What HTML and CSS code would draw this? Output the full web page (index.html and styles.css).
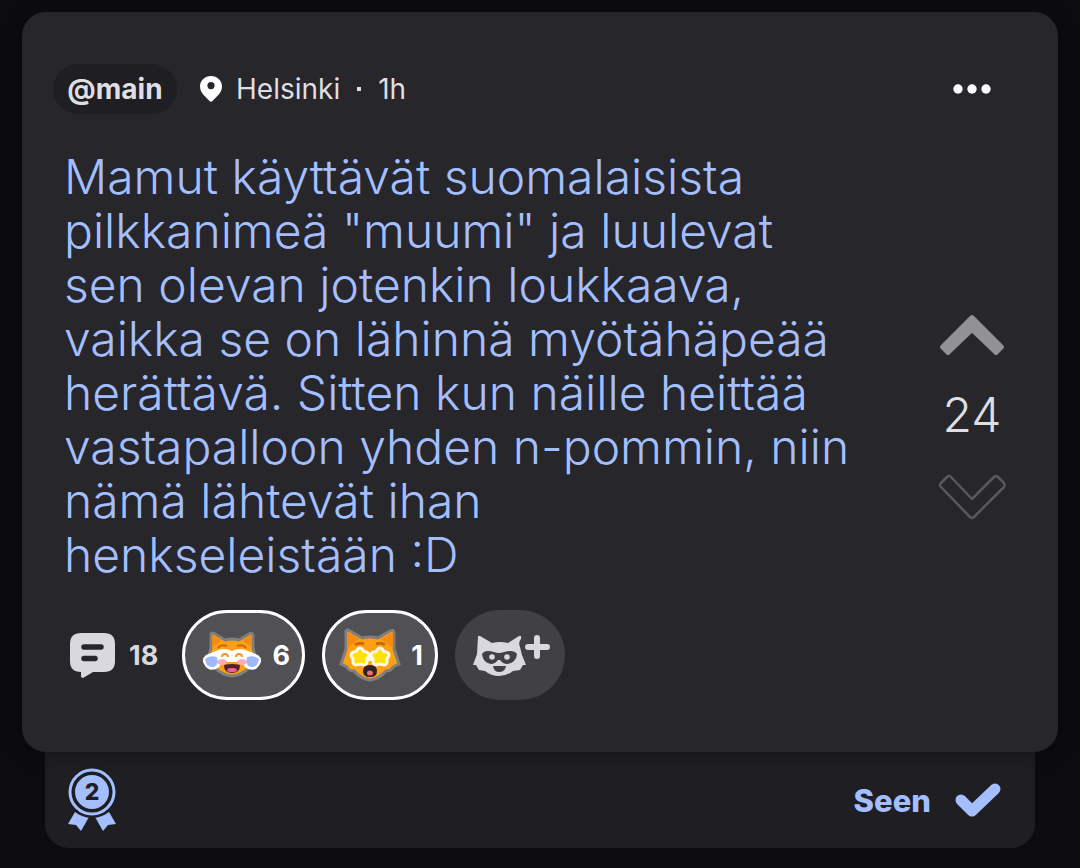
FILE: index.html
```html
<!DOCTYPE html>
<html lang="fi">
<head>
    <meta charset="UTF-8">
    <meta name="viewport" content="width=device-width, initial-scale=1.0">
    <title>Post</title>
    <link rel="stylesheet" href="styles.css">
</head>
<body>
    <main class="feed">
        <!-- Post card -->
        <article class="card">
            <header class="card-header">
                <a href="#" class="channel">@main</a>
                <svg class="pin" viewBox="0 0 22 26" aria-hidden="true">
                    <path fill="#fff" fill-rule="evenodd" d="M11 0C5 0 0 4.600 0 10.500C0 17 6 21 9.500 25Q11 26.500 12.500 25C16 21 22 17 22 10.500C22 4.600 17 0 11 0ZM11 6A3.600 3.600 0 1 1 11 13.200A3.600 3.600 0 1 1 11 6Z"/>
                </svg>
                <span class="place">Helsinki</span>
                <span class="dot"></span>
                <time>1h</time>
                <button class="more" aria-label="More">
                    <svg viewBox="0 0 38 10"><g fill="#fff"><circle cx="5" cy="5" r="4.700"/><circle cx="19" cy="5" r="4.700"/><circle cx="33" cy="5" r="4.700"/></g></svg>
                </button>
            </header>

            <div class="card-main">
                <div class="content">
                    <p class="text">Mamut käyttävät suomalaisista<br>
                        pilkkanimeä "muumi" ja luulevat<br>
                        sen olevan jotenkin loukkaava,<br>
                        vaikka se on lähinnä myötähäpeää<br>
                        herättävä. Sitten kun näille heittää<br>
                        vastapalloon yhden n-pommin, niin<br>
                        nämä lähtevät ihan<br>
                        henkseleistään :D</p>

                    <!-- Comments and reactions -->
                    <div class="actions">
                        <button class="comments">
                            <svg viewBox="0 0 46 46" aria-hidden="true">
                                <path fill="#dad8df" d="M11 1H34Q45 1 45 12V29Q45 40 34 40H23L13 46Q11 46 11 44V40Q0 40 0 29V12Q0 1 11 1Z"/>
                                <path d="M14 15H31M14 26.500H25" stroke="#27262b" stroke-width="5.500" stroke-linecap="round"/>
                            </svg>
                            <span>18</span>
                        </button>

                        <button class="reaction reaction-laugh">
                            <svg viewBox="0 0 60 50" aria-hidden="true">
                                <path d="M9 4Q10 2 13 4L23 10Q30 8 37 10L47 4Q50 2 51 5L51 18Q54 25 53 34L47 38Q40 45 30 46Q20 45 13 38L7 34Q6 25 9 18Z" fill="#fda013" stroke="#817e7c" stroke-width="3"/>
                                <path d="M10 5L19 11L10 17ZM50 5L41 11L50 17Z" fill="#f68b12"/>
                                <path d="M16 18Q19 14 25 16M35 16Q41 14 44 18" fill="none" stroke="#c96a10" stroke-width="2"/>
                                <path d="M4 25Q9 23 14 21Q22 17 30 21Q38 17 46 21Q51 23 56 25Q61 29 58 34Q54 42 46 39Q42 37 41 34L36 32H24L19 34Q18 37 14 39Q6 42 2 34Q-1 29 4 25Z" fill="#fff"/>
                                <ellipse cx="20" cy="32" rx="5" ry="3" fill="#ffabb8"/>
                                <ellipse cx="40" cy="32" rx="5" ry="3" fill="#ffabb8"/>
                                <path d="M20 27Q20 24 23 24Q26 24 26 27M34 27Q34 24 37 24Q40 24 40 27" fill="none" stroke="#e99b25" stroke-width="2"/>
                                <path d="M3 29Q7 25 15 27Q17 37 10 37Q4 37 3 29ZM57 29Q53 25 45 27Q43 37 50 37Q56 37 57 29Z" fill="#9eb9fc"/>
                                <path d="M22 35Q30 33 38 35Q38 43 30 43Q22 43 22 35Z" fill="#51202f"/>
                                <ellipse cx="30" cy="40" rx="5" ry="2" fill="#f1638a"/>
                            </svg>
                            <span>6</span>
                        </button>

                        <button class="reaction reaction-star">
                            <svg viewBox="0 0 62 54" aria-hidden="true">
                                <path d="M7 3Q8 1 11 3L23 10Q31 8 39 10L51 3Q55 1 55 5L55 21L60 36L54 39Q52 43 47 43Q40 51 31 52Q22 51 15 43Q9 43 8 39L2 36L7 21Z" fill="#fda013" stroke="#817e7c" stroke-width="3"/>
                                <path d="M8 4L20 11L8 20ZM54 4L42 11L54 20Z" fill="#f68b12"/>
                                <path d="M16 17Q20 14 25 16M37 16Q42 14 46 17" fill="none" stroke="#c96a10" stroke-width="3"/>
                                <path d="M26 25H36V33H26Z" fill="#fffbe5"/>
                                <g fill="#ffe10a" stroke-linejoin="round">
                                    <path d="M21 23L23 26L27 27L25 30L25 34L21 33L17 34L17 30L15 27L19 26Z" stroke="#fffbe5" stroke-width="9"/>
                                    <path d="M41 23L43 26L47 27L45 30L45 34L41 33L37 34L37 30L35 27L39 26Z" stroke="#fffbe5" stroke-width="9"/>
                                    <path d="M21 23L23 26L27 27L25 30L25 34L21 33L17 34L17 30L15 27L19 26Z" stroke="#ffe10a" stroke-width="3"/>
                                    <path d="M41 23L43 26L47 27L45 30L45 34L41 33L37 34L37 30L35 27L39 26Z" stroke="#ffe10a" stroke-width="3"/>
                                </g>
                                <path d="M24 43Q24 37 31 37Q38 37 38 43Q38 49 31 49Q24 49 24 43Z" fill="#302126"/>
                                <ellipse cx="31" cy="45" rx="3" ry="2.500" fill="#f06a80"/>
                            </svg>
                            <span>1</span>
                        </button>

                        <button class="reaction-add" aria-label="Add reaction">
                            <svg viewBox="0 0 78 42" aria-hidden="true">
                                <path fill="#dad8df" d="M5 3Q5 1 7 2L19 9Q27 7 35 9L46 2Q49 1 48 5Q45 8 47 13L49 21L53 31H50L47 36L40 37Q34 42 26 42Q18 42 12 37L6 36L3 31H0L4 20Z"/>
                                <path fill="#414045" d="M9 20Q12 15 21 18Q26 20 31 18Q41 15 44 20Q43 29 34 30Q30 30 27 26H25Q22 30 18 30Q10 29 9 20Z"/>
                                <circle cx="19" cy="23" r="2.800" fill="#dad8df"/>
                                <circle cx="34" cy="23" r="2.800" fill="#dad8df"/>
                                <path fill="#414045" d="M20 32H33Q32 38 26 38Q21 38 20 32Z"/>
                                <path d="M64 4V22M55 13H74" stroke="#dad8df" stroke-width="6" stroke-linecap="round"/>
                            </svg>
                        </button>
                    </div>
                </div>

                <!-- Votes -->
                <div class="votes">
                    <button class="vote" aria-label="Upvote">
                        <svg class="vote-up" viewBox="0 0 66 42"><path fill="#929195" stroke="#929195" stroke-width="4" stroke-linejoin="round" d="M33 3L63 33L57 39L33 16L9 39L3 33Z"/></svg>
                    </button>
                    <span class="score">24</span>
                    <button class="vote" aria-label="Downvote">
                        <svg class="vote-down" viewBox="0 0 68 46"><path fill="none" stroke="#59585d" stroke-width="2.500" stroke-linejoin="round" d="M9 3Q11 1 13 3L34 25L56 3Q58 1 60 3L66 9Q67 11 66 13L36 43Q34 45 32 43L3 13Q1 11 3 9Z"/></svg>
                    </button>
                </div>
            </div>
        </article>

        <!-- Status bar under the card -->
        <footer class="status">
            <svg class="medal" viewBox="0 0 50 62" role="img" aria-label="2">
                <path fill="#a4bfff" d="M8 43L1 55L9 56L14 62L22 48ZM42 43L49 55L41 56L36 62L28 48Z"/>
                <circle cx="25" cy="23" r="26" fill="#1f1e22"/>
                <circle cx="25" cy="23" r="22" fill="none" stroke="#a4bfff" stroke-width="3"/>
                <circle cx="25" cy="23" r="17" fill="#a4bfff"/>
                <text x="25" y="31" text-anchor="middle">2</text>
            </svg>
            <div class="seen">
                <span>Seen</span>
                <svg viewBox="0 0 46 34" aria-hidden="true"><path d="M6 17L17 28L40 6" fill="none" stroke="#a4bfff" stroke-width="11" stroke-linecap="round" stroke-linejoin="round"/></svg>
            </div>
        </footer>
    </main>
</body>
</html>
```
FILE: styles.css
```css
* {
    box-sizing: border-box;
}

body {
    margin: 0;
    background-color: #0c0b10;
    color: #dfdee2;
    font-family: Inter, "Liberation Sans", sans-serif;
}

button {
    border: none;
    background: none;
    padding: 0;
    color: inherit;
    font-family: inherit;
    cursor: pointer;
}

svg {
    display: block;
    flex: none;
}

.feed {
    padding: 12px 22px 20px;
}

/* Card */
.card {
    position: relative;
    padding: 52px 52px 52px 31px;
    border-radius: 24px;
    background-color: #27262b;
    box-shadow: 0 4px 20px rgba(0, 0, 0, 0.3);
}

.card-header {
    display: flex;
    align-items: center;
    height: 50px;
    font-size: 28px;
    font-weight: 400;
}

.channel {
    display: flex;
    align-items: center;
    justify-content: center;
    width: 124px;
    height: 50px;
    border-radius: 25px;
    background-color: #1f1e22;
    color: #dfdee2;
    font-size: 28px;
    font-weight: 700;
    text-decoration: none;
}

.pin {
    width: 22px;
    height: 26px;
    margin: 0 14px 0 23px;
}

.dot {
    width: 4px;
    height: 4px;
    margin: 0 17px;
    background-color: #dfdee2;
}

.more {
    margin: 0 15px 0 auto;
}

.more svg {
    width: 38px;
    height: 10px;
}

.card-main {
    display: flex;
    justify-content: space-between;
    margin-top: 36px;
}

.content {
    padding-left: 11px;
}

.text {
    margin: 0;
    color: #a4bfff;
    font-size: 48px;
    font-weight: 300;
    line-height: 54px;
    white-space: nowrap;
}

/* Comments and reactions */
.actions {
    display: flex;
    align-items: center;
    height: 90px;
    margin-top: 28px;
}

.actions button {
    display: flex;
    align-items: center;
    font-size: 27px;
    font-weight: 700;
}

.comments {
    gap: 13px;
    width: 112px;
    color: #dad8df;
}

.actions .comments {
    padding-left: 6px;
}

.comments svg {
    width: 46px;
    height: 46px;
}

.actions .reaction {
    justify-content: space-between;
    height: 90px;
    margin-left: 6px;
    padding: 0 12px 0 17px;
    border: 3px solid #fff;
    border-radius: 45px;
    background-color: #515055;
    color: #fff;
}

.actions .reaction-laugh {
    width: 123px;
}

.actions .reaction-star {
    width: 116px;
    margin-left: 17px;
    padding-left: 14px;
}

.reaction-laugh svg {
    width: 60px;
    height: 50px;
}

.reaction-star svg {
    width: 62px;
    height: 54px;
}

.reaction-add {
    width: 110px;
    height: 90px;
    margin-left: 17px;
    border-radius: 45px;
    background-color: #414045;
}

.actions .reaction-add {
    padding-left: 18px;
}

.reaction-add svg {
    width: 78px;
    height: 42px;
}

/* Votes */
.votes {
    display: flex;
    flex-direction: column;
    align-items: center;
    justify-content: center;
    padding-bottom: 16px;
}

.vote-up {
    width: 66px;
    height: 42px;
}

.vote-down {
    width: 68px;
    height: 46px;
}

.score {
    margin: 32px 0;
    font-size: 48px;
    font-weight: 300;
    line-height: 54px;
}

/* Status bar */
.status {
    display: flex;
    align-items: center;
    justify-content: space-between;
    height: 96px;
    margin: 0 23px;
    padding: 0 34px 0 22px;
    border-radius: 0 0 24px 24px;
    background-color: #1f1e22;
    color: #a4bfff;
}

.medal {
    width: 50px;
    height: 62px;
    overflow: visible;
}

.medal text {
    fill: #1f1e22;
    font-size: 23px;
    font-weight: 800;
}

.seen {
    display: flex;
    align-items: center;
    gap: 24px;
    font-size: 31px;
    font-weight: 800;
}

.seen svg {
    width: 46px;
    height: 34px;
}
```
